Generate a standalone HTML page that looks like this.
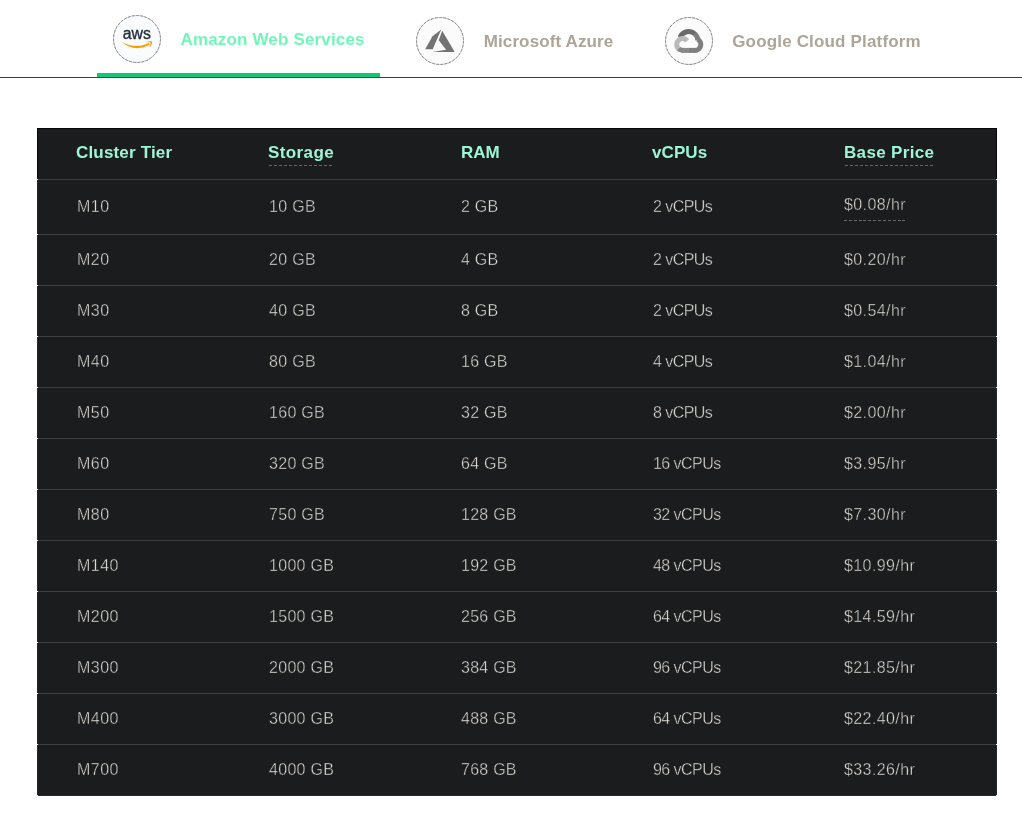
<!DOCTYPE html>
<html lang="en">
<head>
<meta charset="utf-8">
<title>Cluster Pricing</title>
<style>
*{box-sizing:border-box}
html,body{margin:0;padding:0;background:#fff}
body{will-change:transform;width:1022px;height:813px;position:relative;overflow:hidden;font-family:"Liberation Sans",Arial,sans-serif}
.tabs{position:absolute;left:0;top:0;width:1022px;height:78px;border-bottom:1px solid #3b4246}
.tab{position:absolute;top:0;height:77px}
.tab .ic{position:absolute;width:48px;height:48px;border-radius:50%;background:#fbfbfb}
.tab .lb{position:absolute;white-space:nowrap;font-weight:700;font-size:17px;line-height:20px;color:#aca598}
.icons{position:absolute;left:0;top:0}
.tab.on{border-bottom:4px solid #10c875}
.tab.on .lb{color:#71f6ba}
.tab.on .ic{background:#f9fbfd}
table{position:absolute;left:37px;top:128px;width:960px;border-collapse:separate;border-spacing:0;background:#1b1c1e;table-layout:fixed}
th,td{text-align:left;padding:0 0 0 40px;vertical-align:top}
th:first-child,td:first-child{padding-left:39px}
td:nth-child(1){letter-spacing:.45px}
td:nth-child(2){letter-spacing:.3px}
td:nth-child(3){letter-spacing:.25px}
td:nth-child(4){letter-spacing:-.55px}
td:nth-child(5){letter-spacing:.4px}
td:nth-child(5) span{margin-left:-1px}
th:nth-child(1){letter-spacing:.17px}
th:nth-child(2){letter-spacing:.4px}
th:nth-child(3){letter-spacing:0}
th:nth-child(3) span{margin-left:0}
th:nth-child(4){letter-spacing:.1px}
th:nth-child(5){letter-spacing:.33px}
th span{margin-left:-1px}
th{height:51px;font-weight:700;font-size:17px;color:#9df5d4;border-top:1px solid #08080a}
td{height:51px;font-weight:400;font-size:16px;color:#e2ded7;-webkit-text-stroke:.4px #1b1c1e;border-top:1px solid #3a3f42}
th:first-child{border-left:1px solid #08080a}
th:last-child{border-right:1px solid #08080a}
td:first-child{border-left:1px solid #25282a}
td:last-child{border-right:1px solid #25282a}
tr:last-child td{height:52px;border-bottom:1px solid #25282a}
tr.first td{height:55px}
th span,td span{display:inline-block;line-height:20px}
th span{margin-top:14px}
td span{margin-top:15px}
tr.first td span{margin-top:17px}
.dash{position:relative}
.dash::after{content:"";position:absolute;height:1px;background:repeating-linear-gradient(90deg,#63686b 0,#63686b 3px,transparent 3px,transparent 5px)}
th .dash::after{left:1px;top:22px}
th .dash.s::after{width:63px}
th .dash.b::after{width:88px}
td .dash::after{left:0;top:25px;width:61.4px;background:repeating-linear-gradient(90deg,#63686b 0,#63686b 3px,transparent 3px,transparent 4.87px)}
tr.first td .dash{margin-top:15px}
.n{position:absolute;width:1px;background:#fff}
.n1{top:179px;height:1px}
.n2{top:234px;height:562px;background:repeating-linear-gradient(180deg,#fff 0,#fff 1px,transparent 1px,transparent 51px)}
</style>
</head>
<body>
<div class="tabs">
  <div class="tab on" style="left:97px;width:283px">
    <div class="ic" style="left:16px;top:15px"></div>
    <div class="lb" style="left:83.5px;top:30px;letter-spacing:.16px">Amazon Web Services</div>
  </div>
  <div class="tab" style="left:400px;width:229px">
    <div class="ic" style="left:16px;top:17px"></div>
    <div class="lb" style="left:83.7px;top:32px;letter-spacing:.12px">Microsoft Azure</div>
  </div>
  <div class="tab" style="left:649px;width:288px">
    <div class="ic" style="left:16px;top:17px"></div>
    <div class="lb" style="left:83.2px;top:32px;letter-spacing:.17px">Google Cloud Platform</div>
  </div>
<svg class="icons" width="1022" height="78" viewBox="0 0 1022 78">
<g fill="none" stroke="#c9cbcd" stroke-width="1">
<circle cx="137" cy="39" r="23.5"/>
<circle cx="440" cy="41" r="23.5"/>
<circle cx="689" cy="41" r="23.5"/>
</g>
<g fill="none" stroke="#8b8e91" stroke-width="1" stroke-dasharray="2.6 1.6">
<circle cx="137" cy="39" r="23.5"/>
<circle cx="440" cy="41" r="23.5"/>
<circle cx="689" cy="41" r="23.5"/>
</g>
<text x="122.8" y="38.7" font-family="Liberation Sans, Arial, sans-serif" font-size="15.8" fill="#232f3e" stroke="#232f3e" stroke-width=".35">aws</text>
<path d="M121.9,41.8 C130,47.0 141,47.2 148.6,43.1 L149.5,44.6 C141,50.0 129.5,49.4 121.9,41.8 Z" fill="#ff9900"/>
<path d="M146.4,41.9 C148.4,41.2 150.8,41.0 152.0,41.4 C152.3,43.2 151.2,45.8 149.8,47.0 L149.2,46.5 C150.2,45.1 150.8,43.5 150.6,42.5 C149.6,42.2 148.0,42.3 146.6,42.6 Z" fill="#ff9900"/>

<g fill="#737373">
<polygon points="441.2,29.5 432.5,36.2 425.2,49.3 432.7,49.3"/>
<polygon points="442.2,30.8 454.7,51.9 432.3,51.9 446.1,49.8 438.75,40.3"/>
</g>
<g fill="none" stroke-linecap="butt">
<path d="M694.74,33.76 A9.2,9.2 0 0 1 697.89,40.38" stroke="#7f7f7f" stroke-width="5"/>
<path d="M680.11,37.40 A9.2,9.2 0 0 1 694.97,33.97" stroke="#6a6a6a" stroke-width="5"/>
<path d="M697.67,39.29 A5.9,5.9 0 0 1 694.69,50.40" stroke="#7f7f7f" stroke-width="5"/>
<path d="M695.4,50.4 L688.2,50.4" stroke="#7f7f7f" stroke-width="5"/>
<path d="M683.11,50.38 A5.9,5.9 0 0 1 678.22,48.45" stroke="#888888" stroke-width="5"/>
<path d="M688.9,50.4 L682.0,50.4" stroke="#888888" stroke-width="5"/>
<path d="M678.43,48.67 A5.9,5.9 0 1 1 687.25,40.87" stroke="#b9b9b9" stroke-width="5"/>
</g></svg>
</div>
<table>
<thead>
<tr><th><span>Cluster Tier</span></th><th><span class="dash s">Storage</span></th><th><span>RAM</span></th><th><span>vCPUs</span></th><th><span class="dash b">Base Price</span></th></tr>
</thead>
<tbody>
<tr class="first"><td><span>M10</span></td><td><span>10 GB</span></td><td><span>2 GB</span></td><td><span>2 vCPUs</span></td><td><span class="dash">$0.08/hr</span></td></tr>
<tr><td><span>M20</span></td><td><span>20 GB</span></td><td><span>4 GB</span></td><td><span>2 vCPUs</span></td><td><span>$0.20/hr</span></td></tr>
<tr><td><span>M30</span></td><td><span>40 GB</span></td><td><span>8 GB</span></td><td><span>2 vCPUs</span></td><td><span>$0.54/hr</span></td></tr>
<tr><td><span>M40</span></td><td><span>80 GB</span></td><td><span>16 GB</span></td><td><span>4 vCPUs</span></td><td><span>$1.04/hr</span></td></tr>
<tr><td><span>M50</span></td><td><span>160 GB</span></td><td><span>32 GB</span></td><td><span>8 vCPUs</span></td><td><span>$2.00/hr</span></td></tr>
<tr><td><span>M60</span></td><td><span>320 GB</span></td><td><span>64 GB</span></td><td><span>16 vCPUs</span></td><td><span>$3.95/hr</span></td></tr>
<tr><td><span>M80</span></td><td><span>750 GB</span></td><td><span>128 GB</span></td><td><span>32 vCPUs</span></td><td><span>$7.30/hr</span></td></tr>
<tr><td><span>M140</span></td><td><span>1000 GB</span></td><td><span>192 GB</span></td><td><span>48 vCPUs</span></td><td><span>$10.99/hr</span></td></tr>
<tr><td><span>M200</span></td><td><span>1500 GB</span></td><td><span>256 GB</span></td><td><span>64 vCPUs</span></td><td><span>$14.59/hr</span></td></tr>
<tr><td><span>M300</span></td><td><span>2000 GB</span></td><td><span>384 GB</span></td><td><span>96 vCPUs</span></td><td><span>$21.85/hr</span></td></tr>
<tr><td><span>M400</span></td><td><span>3000 GB</span></td><td><span>488 GB</span></td><td><span>64 vCPUs</span></td><td><span>$22.40/hr</span></td></tr>
<tr><td><span>M700</span></td><td><span>4000 GB</span></td><td><span>768 GB</span></td><td><span>96 vCPUs</span></td><td><span>$33.26/hr</span></td></tr>
</tbody>
</table>
<div class="n n1" style="left:37px"></div><div class="n n2" style="left:37px"></div>
<div class="n n1" style="left:996px"></div><div class="n n2" style="left:996px"></div>
</body>
</html>
